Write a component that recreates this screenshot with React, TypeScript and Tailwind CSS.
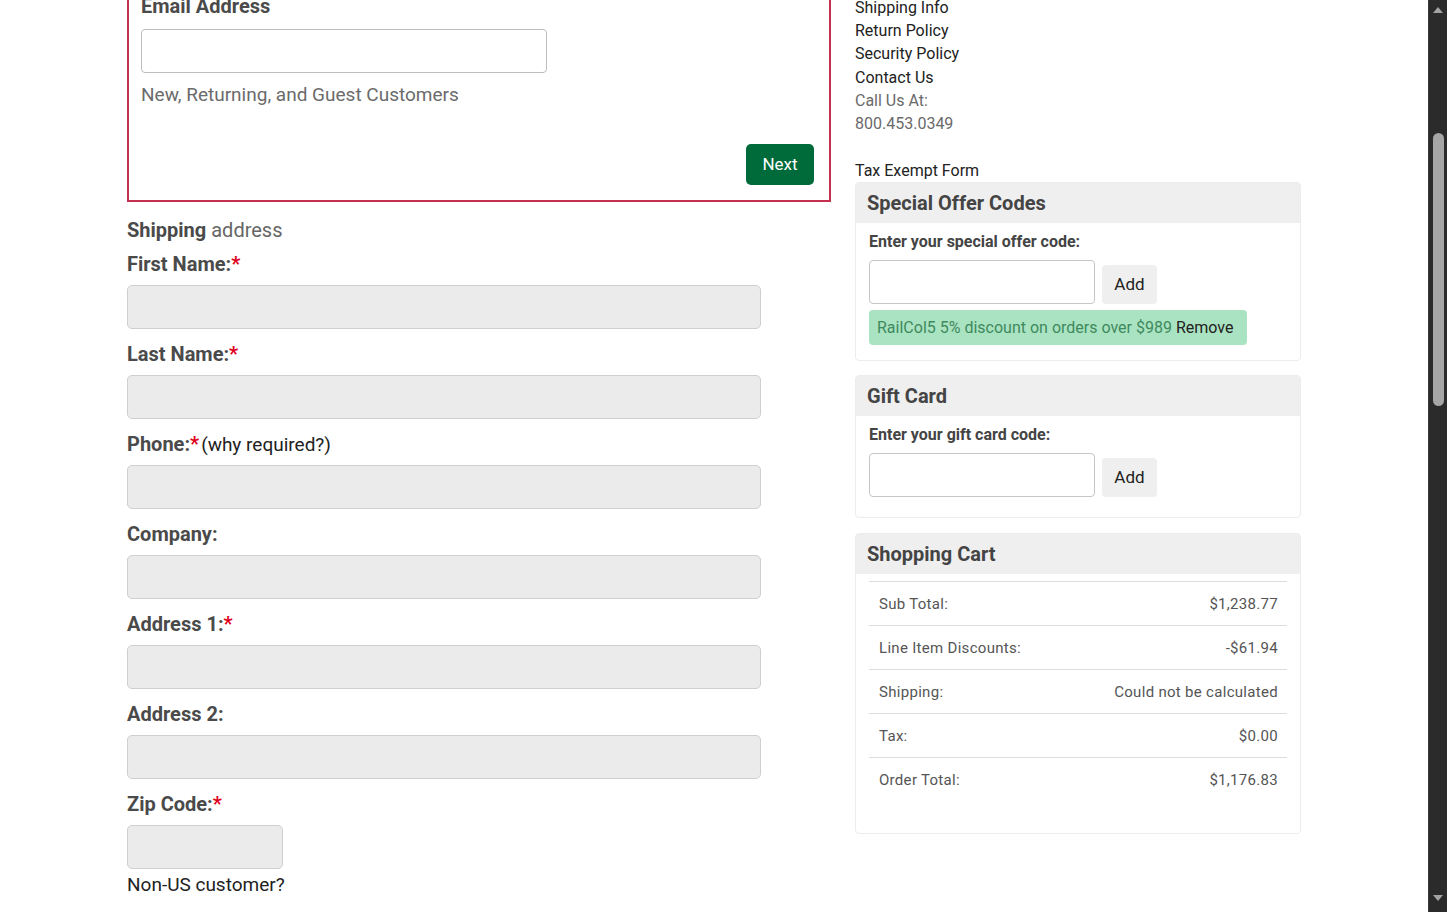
import React, { useLayoutEffect, useRef } from 'react';

type FieldProps = {
  label: string;
  required?: boolean;
  extra?: string;
  narrow?: boolean;
};

const Field: React.FC<FieldProps> = ({ label, required, extra, narrow }) => (
  <div className={narrow ? '' : 'mb-[13px]'}>
    <div className="h-[24px] text-[20px] leading-[24px] font-bold text-[#4a4a4a]">
      {label}
      {required && <span className="text-[#e0001b]">*</span>}
      {extra && <span className="pl-[2px] text-[19px] leading-[20px] font-normal text-[#222]">{extra}</span>}
    </div>
    <input
      className={`mt-[9px] block h-[44px] rounded-[5px] border border-[#cfcfcf] bg-[#ebebeb] outline-none ${
        narrow ? 'w-[156px]' : 'w-[634px]'
      }`}
    />
  </div>
);

const CardHeader: React.FC<{ title: string }> = ({ title }) => (
  <h3 className="h-[40px] bg-[#efefef] pl-[11px] text-[20px] leading-[40px] font-bold text-[#444]">{title}</h3>
);

const CodeForm: React.FC<{ label: string }> = ({ label }) => (
  <>
    <div className="text-[16px] leading-[20px] font-bold text-[#444]">{label}</div>
    <div className="mt-[8px] flex items-end gap-[7px]">
      <input className="h-[44px] w-[226px] rounded-[4px] border border-[#c6c6c6] bg-white outline-none" />
      <button className="h-[39px] w-[55px] rounded-[4px] bg-[#efefef] text-[17px] text-[#222]">Add</button>
    </div>
  </>
);

const totals = [
  ['Sub Total:', '$1,238.77'],
  ['Line Item Discounts:', '-$61.94'],
  ['Shipping:', 'Could not be calculated'],
  ['Tax:', '$0.00'],
  ['Order Total:', '$1,176.83'],
];

// window scrollbar, drawn since the browser's own is hidden
const ScrollBar: React.FC = () => (
  <div className="flex w-[19px] shrink-0 flex-col items-center border-l border-[#3a3a3a] bg-[#2b2b2b]">
    <svg width="10" height="6" viewBox="0 0 10 6" className="mt-[7px]">
      <path d="M5 0 L10 6 L0 6 Z" fill="#a3a3a3" />
    </svg>
    <div className="mt-[120px] h-[273px] w-[11px] rounded-full bg-[#a6a6a6]" />
    <div className="flex-1" />
    <svg width="10" height="6" viewBox="0 0 10 6" className="mb-[11px]">
      <path d="M0 0 L10 0 L5 6 Z" fill="#a3a3a3" />
    </svg>
  </div>
);

const App: React.FC = () => {
  const scroller = useRef<HTMLDivElement>(null);

  useLayoutEffect(() => {
    if (scroller.current) scroller.current.scrollTop = 406;
  }, []);

  return (
    <div className="flex h-screen bg-white">
      <div ref={scroller} className="flex-1 overflow-y-scroll [scrollbar-width:none]">
        <div className="flex min-h-[2960px] flex-col bg-white font-[Roboto,sans-serif] text-[#222]">
          {/* header, above the fold */}
          <header className="h-[285px] border-b border-[#e5e5e5]">
            <div className="mx-auto flex h-[120px] w-[1174px] items-center justify-between">
              <div className="text-[32px] font-bold text-[#006b3a]">TrainWorld</div>
              <div className="text-[16px] text-[#444]">800.453.0349</div>
            </div>
            <nav className="h-[50px] bg-[#006b3a]" />
          </header>

          <main className="mx-auto grid w-[1174px] grid-cols-[704px_446px] items-start gap-x-6">
            <div>
              <div className="h-[101px] pt-[30px]">
                <h1 className="text-[30px] font-bold text-[#333]">Secure Checkout</h1>
              </div>

              <section className="border-2 border-[#c5304e] pt-[12px] pr-[15px] pb-[15px] pl-[12px]">
                <div className="text-[20px] leading-[24px] font-bold text-[#4a4a4a]">Email Address</div>
                <input className="mt-[11px] block h-[44px] w-[406px] rounded-[4px] border border-[#bdbdbd] bg-white outline-none" />
                <p className="mt-[9px] text-[19px] leading-[26px] text-[#6b6b6b]">New, Returning, and Guest Customers</p>
                <div className="mt-[36px] flex justify-end">
                  <button className="h-[41px] w-[68px] rounded-[5px] bg-[#006b3a] text-[17px] text-white">Next</button>
                </div>
              </section>

              <div className="mt-[16px] text-[20px] leading-[24px]">
                <span className="font-bold text-[#4a4a4a]">Shipping</span>{' '}
                <span className="text-[#666]">address</span>
              </div>

              <div className="mt-[10px]">
                <Field label="First Name:" required />
                <Field label="Last Name:" required />
                <Field label="Phone:" required extra="(why required?)" />
                <Field label="Company:" />
                <Field label="Address 1:" required />
                <Field label="Address 2:" />
                <Field label="Zip Code:" required narrow />
                <div className="mt-[4px] text-[19px] leading-[24px] text-[#222]">Non-US customer?</div>
              </div>

              <div className="mt-[40px]">
                <Field label="City:" required />
                <Field label="State:" required />
                <div className="mt-[30px] text-[20px] leading-[24px] font-bold text-[#4a4a4a]">Shipping Method</div>
                <p className="mt-[10px] text-[16px] text-[#666]">Enter your address to see shipping options.</p>
                <button className="mt-[30px] h-[44px] w-[160px] rounded-[5px] bg-[#006b3a] text-[17px] text-white">Continue</button>
              </div>
            </div>

            <aside>
              <ul className="text-[16px] leading-[23.33px] text-[#222]">
                <li className="font-bold">Customer Service</li>
                <li>My Account</li>
                <li>Order Status</li>
                <li>FAQ</li>
                <li>Privacy Policy</li>
                <li>Shipping Info</li>
                <li>Return Policy</li>
                <li>Security Policy</li>
                <li>Contact Us</li>
                <li className="text-[#6a6a6a]">Call Us At:</li>
                <li className="text-[#6a6a6a]">800.453.0349</li>
                <li>&nbsp;</li>
                <li>Tax Exempt Form</li>
              </ul>

              <section className="rounded-[4px] border border-[#ececec]">
                <CardHeader title="Special Offer Codes" />
                <div className="px-[13px] pt-[9px] pb-[15px]">
                  <CodeForm label="Enter your special offer code:" />
                  <div className="mt-[6px] h-[35px] w-[378px] rounded-[4px] bg-[#aae3c1] px-[8px] text-[16px] leading-[35px] text-[#3e8a5e]">
                    RailCol5 5% discount on orders over $989 <span className="text-[#222]">Remove</span>
                  </div>
                </div>
              </section>

              <section className="mt-[14px] rounded-[4px] border border-[#ececec]">
                <CardHeader title="Gift Card" />
                <div className="px-[13px] pt-[9px] pb-[20px]">
                  <CodeForm label="Enter your gift card code:" />
                </div>
              </section>

              <section className="mt-[15px] rounded-[4px] border border-[#ececec]">
                <CardHeader title="Shopping Cart" />
                <div className="mx-[13px] mt-[7px] pb-[32px]">
                  {totals.map(([label, value]) => (
                    <div
                      key={label}
                      className="flex h-[44px] items-center justify-between border-t border-[#dedede] pr-[9px] pl-[10px] text-[15px] tracking-[0.3px] text-[#555]"
                    >
                      <span>{label}</span>
                      <span>{value}</span>
                    </div>
                  ))}
                </div>
              </section>
            </aside>
          </main>

          <footer className="mt-auto h-[420px] bg-[#1f3d2c] pt-[40px]">
            <div className="mx-auto grid w-[1174px] grid-cols-4 gap-6 text-[15px] text-[#d7e4dc]">
              <div>About Us</div>
              <div>Customer Service</div>
              <div>Shop</div>
              <div>Newsletter</div>
            </div>
          </footer>
        </div>
      </div>
      <ScrollBar />
    </div>
  );
};

export default App;
